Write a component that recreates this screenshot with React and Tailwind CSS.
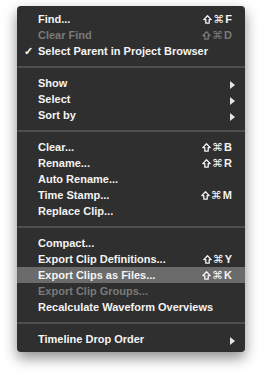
import React from 'react';

const groups = [
  [
    { label: 'Find...', key: 'F' },
    { label: 'Clear Find', key: 'D', disabled: true },
    { label: 'Select Parent in Project Browser', checked: true },
  ],
  [
    { label: 'Show', sub: true },
    { label: 'Select', sub: true },
    { label: 'Sort by', sub: true },
  ],
  [
    { label: 'Clear...', key: 'B' },
    { label: 'Rename...', key: 'R' },
    { label: 'Auto Rename...' },
    { label: 'Time Stamp...', key: 'M' },
    { label: 'Replace Clip...' },
  ],
  [
    { label: 'Compact...' },
    { label: 'Export Clip Definitions...', key: 'Y' },
    { label: 'Export Clips as Files...', key: 'K', active: true },
    { label: 'Export Clip Groups...', disabled: true },
    { label: 'Recalculate Waveform Overviews' },
  ],
  [{ label: 'Timeline Drop Order', sub: true }],
];

// outlined shift arrow, drawn as in the menu
const Shift = () => (
  <svg width="9" height="9" viewBox="0 0 9 9" className="mr-[1px]">
    <path d="M4.5 0.8 L8.2 4.6 L6.2 4.6 L6.2 8.2 L2.8 8.2 L2.8 4.6 L0.8 4.6 Z" fill="none" stroke="currentColor" strokeWidth="1.3" strokeLinejoin="round" />
  </svg>
);

const Item = ({ item }) => (
  <div
    className={`h-4 flex items-center pl-[7px] pr-[13px] ${item.active ? 'bg-[#6b6b6b]' : ''} ${
      item.disabled ? 'text-[#7a7a7a]' : 'text-[#f4f4f4]'
    }`}
  >
    <span className="w-[14px] shrink-0 text-[11px] leading-none">{item.checked ? '✓' : ''}</span>
    <span className="flex-1 whitespace-nowrap">{item.label}</span>
    {item.key && (
      <span className="flex items-center">
        <Shift />
        <span className="font-['DejaVu_Sans',sans-serif] font-normal text-[11px] leading-none mt-[1px]">⌘</span>
        <span className="ml-[1px] leading-none">{item.key}</span>
      </span>
    )}
    {item.sub && (
      <svg width="5" height="8" viewBox="0 0 5 8" className="mr-[-3px] mt-[3px]">
        <path d="M0 0 L5 4 L0 8 Z" fill="#e6e6e6" />
      </svg>
    )}
  </div>
);

export default function App() {
  return (
    <div className="w-[262px] h-[378px] bg-white pt-[6px] pl-[17px]">
      <div className="w-[228px] rounded-[4px] bg-[#2f2f2f] py-[5px] shadow-[0_6px_14px_rgba(0,0,0,0.45)] font-['Liberation_Sans',sans-serif] font-bold text-[11px] leading-4">
        {groups.map((g, i) => (
          <div key={i}>
            {i > 0 && (
              <div className="h-4 flex items-center">
                <div className="w-full h-[2px] bg-[#4d4d4d]" />
              </div>
            )}
            {g.map((item) => (
              <Item key={item.label} item={item} />
            ))}
          </div>
        ))}
      </div>
    </div>
  );
}
